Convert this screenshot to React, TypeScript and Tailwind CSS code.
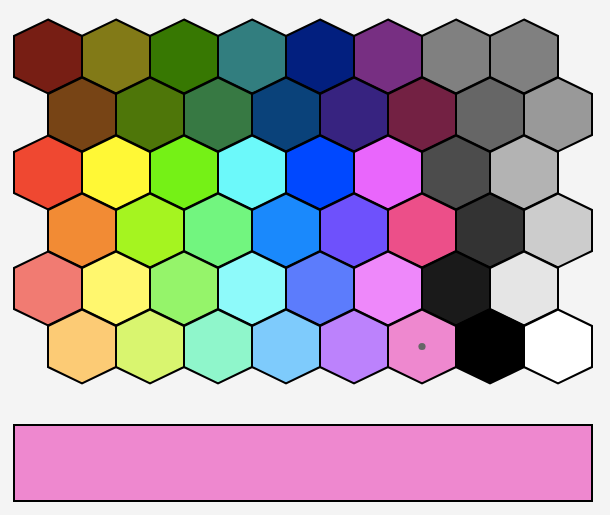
import React, { useState } from "react";

const ROWS: string[][] = [
  ["#771E14", "#827A17", "#377802", "#327E7F", "#021F7F", "#772F82", "#808080", "#808080"],
  ["#774415", "#4E7609", "#377943", "#0A427A", "#372380", "#732143", "#666666", "#999999"],
  ["#EF4831", "#FFF836", "#75F116", "#6CF9FA", "#0048FF", "#E966FC", "#4C4C4C", "#B3B3B3"],
  ["#F28B34", "#A5F420", "#72F57F", "#1A89FC", "#6E51FC", "#EC4F89", "#333333", "#CCCCCC"],
  ["#F17B72", "#FFF76E", "#95F46A", "#8EFAFA", "#5C7CFC", "#EE88FA", "#1A1A1A", "#E5E5E5"],
  ["#FCCB75", "#D9F56F", "#8FF6CB", "#7ECBFC", "#BC82FC", "#EE88CF", "#000000", "#FFFFFF"],
];

function Hex({ color, selected, onClick }: { color: string; selected: boolean; onClick: () => void }) {
  return (
    <svg
      width={68}
      height={75}
      viewBox="0 0 68 75"
      className="block shrink-0 overflow-visible cursor-pointer"
      onClick={onClick}
    >
      <polygon
        points="34,0.5 68,17 68,58 34,74.5 0,58 0,17"
        fill={color}
        stroke="#000"
        strokeWidth={2}
        strokeLinejoin="miter"
      />
      {selected && <circle cx={34} cy={37.5} r={3.6} fill="#666666" />}
    </svg>
  );
}

export default function App() {
  const [sel, setSel] = useState<[number, number]>([5, 5]);
  const color = ROWS[sel[0]][sel[1]];
  return (
    <div className="w-[610px] h-[515px] bg-[#f4f4f4] overflow-hidden" style={{ fontFamily: "'Liberation Sans', sans-serif" }}>
      <div className="pt-[19px] pl-[14px] flex flex-col">
        {ROWS.map((row, r) => (
          <div
            key={r}
            className={
              "flex " + (r % 2 === 1 ? "ml-[34px] " : "") + (r > 0 ? "-mt-[17px]" : "")
            }
          >
            {row.map((c, i) => (
              <Hex key={i} color={c} selected={sel[0] === r && sel[1] === i} onClick={() => setSel([r, i])} />
            ))}
          </div>
        ))}
      </div>
      <div className="ml-[13px] mt-[40px] w-[580px] h-[78px] border-2 border-black" style={{ backgroundColor: color }} />
    </div>
  );
}
